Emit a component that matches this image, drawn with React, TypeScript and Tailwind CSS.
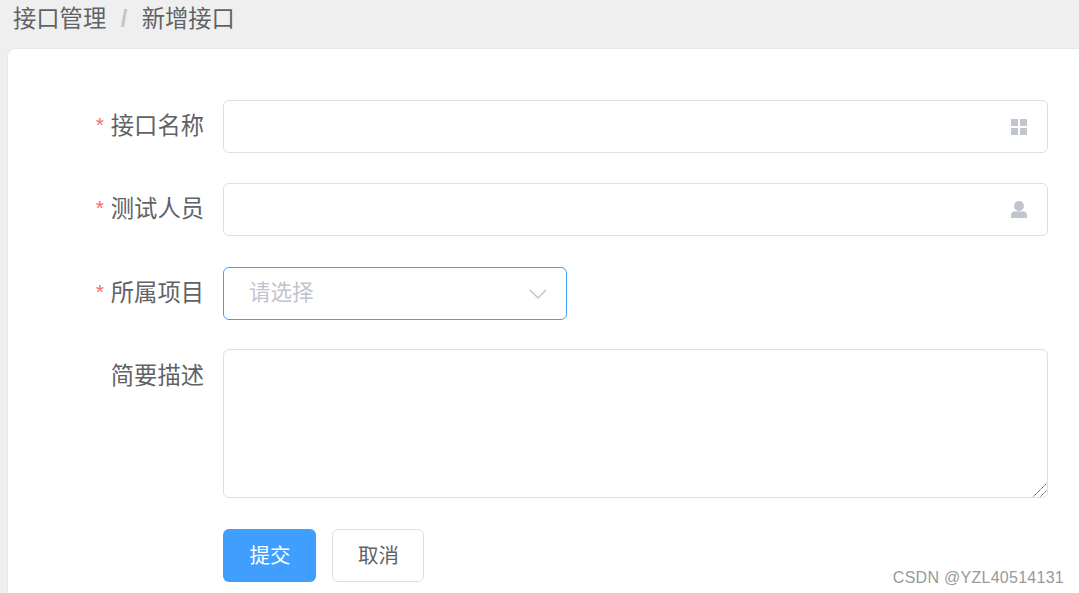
const font = "font-['Liberation_Sans','Noto_Sans_CJK_SC',sans-serif]";

function FormRow({
  label,
  required,
  children,
}: {
  label: string;
  required?: boolean;
  children: React.ReactNode;
}) {
  return (
    <div className="flex items-start">
      <label
        className={`flex h-[53px] w-[196px] shrink-0 items-center justify-end gap-[7px] text-[23.300px] text-[#606266] ${
          required ? "" : "pt-[2px]"
        }`}
      >
        {required && <span className="mb-[5px] text-[21px] leading-none text-[#f56c6c]">*</span>}
        <span>{label}</span>
      </label>
      <div className="ml-[19px] min-w-0 flex-1">{children}</div>
    </div>
  );
}

function TextInput({ icon }: { icon: React.ReactNode }) {
  return (
    <div className="relative h-[53px] w-full">
      <input className="h-full w-full rounded-[6px] border border-[#dcdfe6] bg-white px-5 outline-none" />
      <span className="absolute top-1/2 right-[20px] -translate-y-1/2 text-[#c0c4cc]">{icon}</span>
    </div>
  );
}

function GridIcon() {
  return (
    <svg width="18" height="18" viewBox="0 0 18 18" fill="currentColor" className="block">
      <rect x="1" y="1" width="7" height="7" />
      <rect x="10" y="1" width="7" height="7" />
      <rect x="1" y="10" width="7" height="7" />
      <rect x="10" y="10" width="7" height="7" />
    </svg>
  );
}

function UserIcon() {
  return (
    <svg width="18" height="20" viewBox="0 0 18 20" fill="currentColor" className="block">
      <circle cx="9" cy="6" r="5" />
      <path d="M1 18v-3c0-2 1.500-3.500 3.500-3.500h9c2 0 3.500 1.500 3.500 3.500v3z" />
    </svg>
  );
}

export default function App() {
  return (
    <div className={`${font} flex h-[593px] w-[1079px] flex-col overflow-hidden bg-[#efefef]`}>
      {/* Breadcrumb */}
      <div className="flex h-[48px] shrink-0 items-start pt-[4px] pl-[13px] text-[23.300px] leading-[31px] text-[#606266]">
        <span>接口管理</span>
        <span className="mx-[14.500px] font-bold text-[#c0c4cc]">/</span>
        <span>新增接口</span>
      </div>

      {/* Card */}
      <div className="relative ml-[7px] flex-1 rounded-tl-[8px] border-t border-l border-[#e4e7ed] bg-white pt-[51px] pr-[31px]">
        <div className="flex flex-col">
          <FormRow label="接口名称" required>
            <TextInput icon={<GridIcon />} />
          </FormRow>

          <div className="mt-[30px]">
            <FormRow label="测试人员" required>
              <TextInput icon={<UserIcon />} />
            </FormRow>
          </div>

          <div className="mt-[31px]">
            <FormRow label="所属项目" required>
              <div className="flex h-[53px] w-[344px] items-center justify-between rounded-[6px] border border-[#409eff] bg-white pr-[18px] pl-[25px]">
                <span className="text-[21.500px] text-[#c0c4cc]">请选择</span>
                <svg width="20" height="12" viewBox="0 0 20 12" fill="none" stroke="#c0c4cc" strokeWidth="1.500">
                  <path d="M2 2l8 8 8-8" />
                </svg>
              </div>
            </FormRow>
          </div>

          <div className="mt-[29px]">
            <FormRow label="简要描述">
              <div className="relative">
                <textarea className="block h-[149px] w-full resize-none rounded-[6px] border border-[#dcdfe6] bg-white px-5 py-2 outline-none" />
                {/* resize handle */}
                <svg width="15" height="15" viewBox="0 0 15 15" fill="none" stroke="#555555" className="absolute right-[1px] bottom-[1px]">
                  <path d="M1.500 14.500L14.500 1.500M8.500 14.500L14.500 8.500" strokeDasharray="1.500 0.500" />
                </svg>
              </div>
            </FormRow>
          </div>

          <div className="mt-[31px] ml-[215px] flex gap-[16px]">
            <button className="h-[53px] w-[93px] rounded-[6px] bg-[#409eff] pt-[1px] pl-[1px] text-[20.500px] text-white">提交</button>
            <button className="h-[53px] w-[92px] rounded-[6px] border border-[#dcdfe6] bg-white pt-[1px] pl-[1px] text-[20.500px] text-[#606266]">
              取消
            </button>
          </div>
        </div>

        {/* Watermark */}
        <span className="absolute right-[15px] bottom-[6px] text-[16px] leading-[18px] tracking-[0.270px] text-[#999999]">
          CSDN @YZL40514131
        </span>
      </div>
    </div>
  );
}
